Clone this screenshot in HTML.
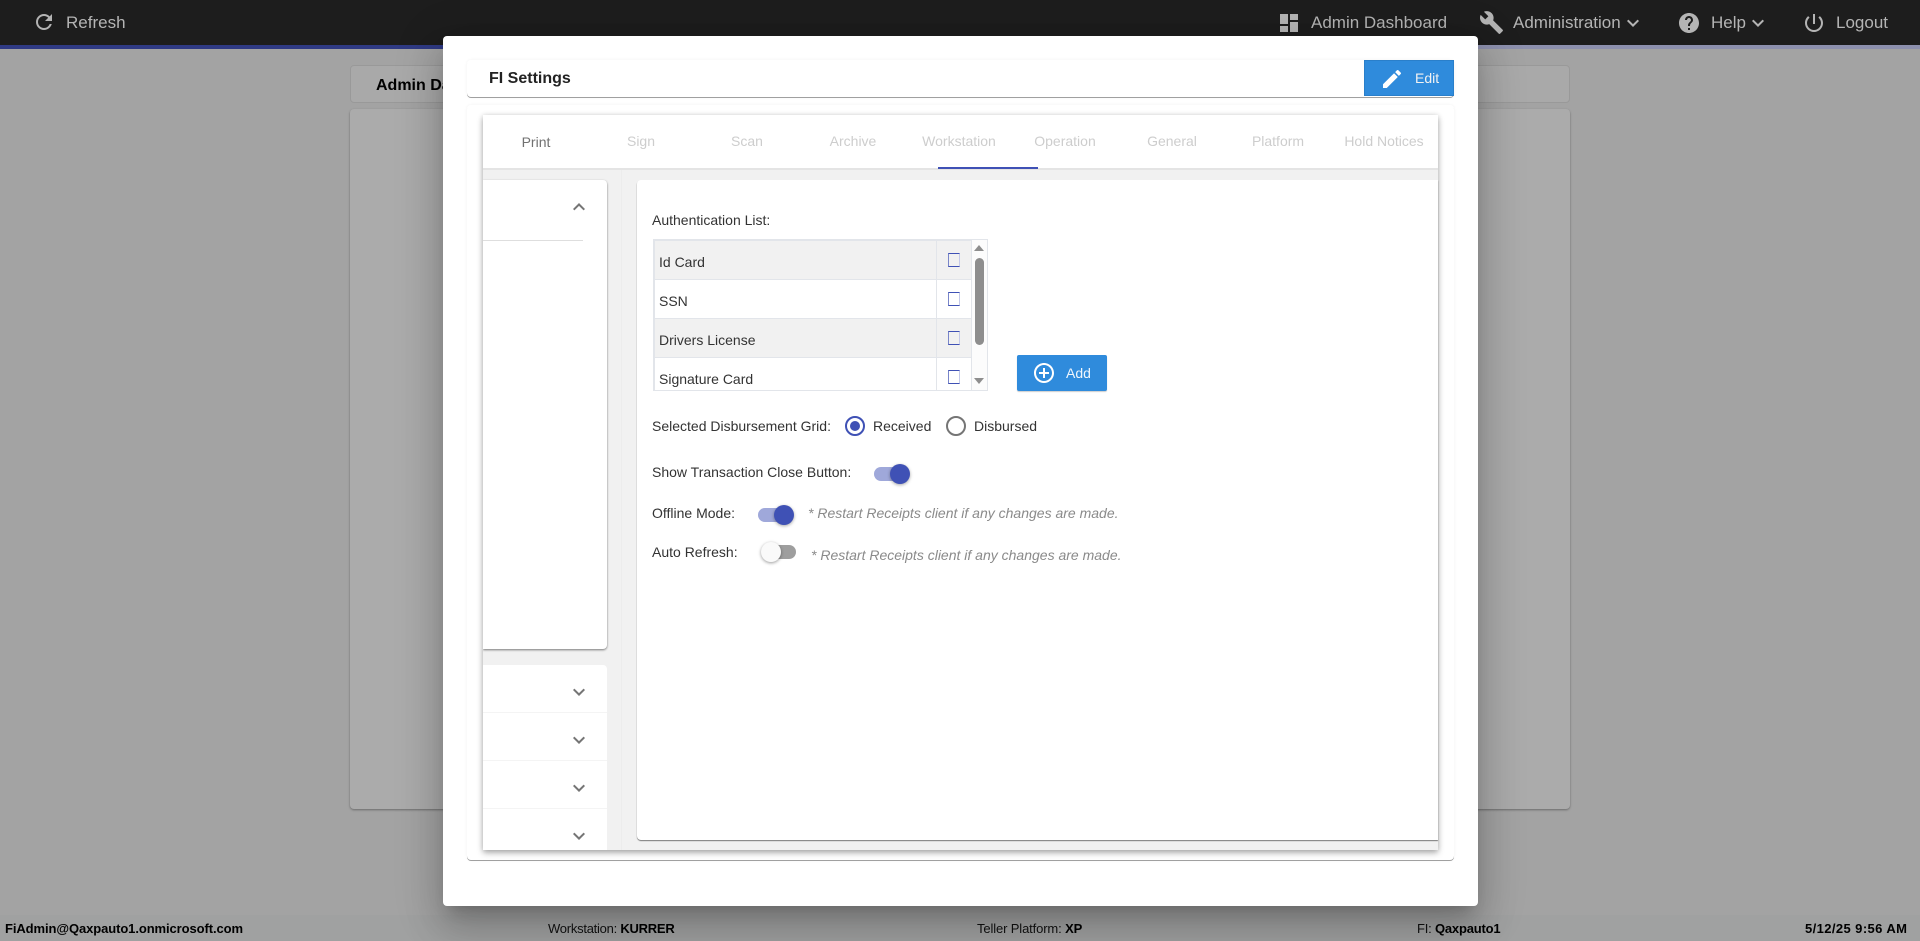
<!DOCTYPE html>
<html><head><meta charset="utf-8"><title>FI Settings</title>
<style>
html,body{margin:0;padding:0}
body{width:1920px;height:941px;overflow:hidden;position:relative;background:#a3a3a3;font-family:"Liberation Sans",sans-serif;font-size:14px;color:#333}
div,span,svg{position:absolute;box-sizing:border-box}
.t{line-height:20px;height:20px;white-space:nowrap}
svg{display:block}
.top{color:#b4b4b4;font-size:17px}
.ic{fill:#b4b4b4}
.tab{color:#cdcdcd;width:106px;text-align:center}
.st{font-size:13px;color:#111;white-space:nowrap;line-height:18px;height:18px}
.st b{position:static;color:#000}
.cell{background:#f1f1f1}
.cb{width:12px;height:14px;border:1px solid #3f51b5;border-right-color:#c5cae9;border-left-color:#7985c9;background:transparent}
.sep{left:483px;width:124px;height:1px;background:#f4f4f4}
.note{font-style:italic;color:#8a8a8a}
.ch{fill:#757575}
</style></head><body>
<!-- top bar -->
<div style="left:0;top:0;width:1920px;height:45px;background:#1d1d1d"></div>
<div style="left:0;top:45px;width:443px;height:4px;background:#2f3a84"></div>
<div style="left:1478px;top:45px;width:442px;height:4px;background:#8d90ad"></div>
<svg class="ic" style="left:32px;top:10px" width="24" height="24" viewBox="0 0 24 24"><path d="M17.65 6.35C16.2 4.9 14.21 4 12 4c-4.42 0-7.99 3.58-7.99 8s3.57 8 7.99 8c3.73 0 6.84-2.55 7.73-6h-2.08c-.82 2.33-3.04 4-5.65 4-3.31 0-6-2.69-6-6s2.69-6 6-6c1.66 0 3.14.69 4.22 1.78L13 11h7V4l-2.35 2.35z"/></svg>
<div class="t top" style="left:66px;top:13px">Refresh</div>
<svg class="ic" style="left:1277px;top:11px" width="24" height="24" viewBox="0 0 24 24"><path d="M3 13h8V3H3v10zm0 8h8v-6H3v6zm10 0h8V11h-8v10zm0-18v6h8V3h-8z"/></svg>
<div class="t top" style="left:1311px;top:13px">Admin Dashboard</div>
<svg class="ic" style="left:1479px;top:10px" width="25" height="25" viewBox="0 0 24 24"><path d="M22.7 19l-9.1-9.1c.9-2.3.4-5-1.5-6.9-2-2-5-2.4-7.4-1.3L9 6 6 9 1.6 4.7C.4 7.1.9 10.1 2.9 12.1c1.9 1.9 4.6 2.4 6.9 1.5l9.1 9.1c.4.4 1 .4 1.4 0l2.3-2.3c.5-.4.5-1.1.1-1.4z"/></svg>
<div class="t top" style="left:1513px;top:13px">Administration</div>
<svg class="ic" style="left:1621px;top:11px" width="24" height="24" viewBox="0 0 24 24"><path d="M16.59 8.59L12 13.17 7.41 8.59 6 10l6 6 6-6z"/></svg>
<svg class="ic" style="left:1677px;top:11px" width="24" height="24" viewBox="0 0 24 24"><path d="M12 2C6.48 2 2 6.48 2 12s4.48 10 10 10 10-4.48 10-10S17.52 2 12 2zm1 17h-2v-2h2v2zm2.07-7.75l-.9.92C13.45 12.9 13 13.5 13 15h-2v-.5c0-1.1.45-2.1 1.17-2.83l1.24-1.26c.37-.36.59-.86.59-1.41 0-1.1-.9-2-2-2s-2 .9-2 2H8c0-2.21 1.79-4 4-4s4 1.79 4 4c0 .88-.36 1.68-.93 2.25z"/></svg>
<div class="t top" style="left:1711px;top:13px">Help</div>
<svg class="ic" style="left:1746px;top:11px" width="24" height="24" viewBox="0 0 24 24"><path d="M16.59 8.59L12 13.17 7.41 8.59 6 10l6 6 6-6z"/></svg>
<svg class="ic" style="left:1802px;top:11px" width="24" height="24" viewBox="0 0 24 24"><path d="M13 3h-2v10h2V3zm4.83 2.17l-1.42 1.42C17.99 7.86 19 9.81 19 12c0 3.87-3.13 7-7 7s-7-3.13-7-7c0-2.19 1.01-4.14 2.58-5.42L6.17 5.17C4.23 6.82 3 9.26 3 12c0 4.97 4.03 9 9 9s9-4.03 9-9c0-2.74-1.23-5.18-3.17-6.83z"/></svg>
<div class="t top" style="left:1836px;top:13px">Logout</div>

<!-- background cards -->
<div style="left:350px;top:65px;width:1220px;height:38px;background:#a9a9a9;border:1px solid #999;border-radius:4px"></div>
<div class="t" style="left:376px;top:76px;font-size:16px;font-weight:bold;color:#000">Admin Dashboard</div>
<div style="left:350px;top:109px;width:1220px;height:700px;background:#ababab;border-radius:4px;box-shadow:0 1px 2px rgba(0,0,0,.35)"></div>

<!-- status bar -->
<div style="left:0;top:915px;width:1920px;height:26px;background:#a0a1a1"></div>
<div class="st" style="left:5px;top:920px;letter-spacing:-.09px"><b>FiAdmin@Qaxpauto1.onmicrosoft.com</b></div>
<div class="st" style="left:548px;top:920px;letter-spacing:-.25px">Workstation: <b>KURRER</b></div>
<div class="st" style="left:977px;top:920px;letter-spacing:-.13px">Teller Platform: <b>XP</b></div>
<div class="st" style="left:1417px;top:920px;letter-spacing:-.2px">FI: <b>Qaxpauto1</b></div>
<div class="st" style="left:1805px;top:920px;letter-spacing:.4px"><b>5/12/25 9:56 AM</b></div>

<!-- modal -->
<div style="left:443px;top:36px;width:1035px;height:870px;background:#fff;border-radius:4px;box-shadow:0 11px 15px -7px rgba(0,0,0,.2),0 24px 38px 3px rgba(0,0,0,.14),0 9px 46px 8px rgba(0,0,0,.12)"></div>

<!-- header card -->
<div style="left:467px;top:60px;width:987px;height:37px;background:#fff;border-radius:4px;box-shadow:0 1px 0 #a0a0a0,0 0 3px rgba(0,0,0,.06)"></div>
<div class="t" style="left:489px;top:69px;font-size:16px;font-weight:bold;color:#222">FI Settings</div>
<div style="left:1364px;top:60px;width:90px;height:36px;background:#2f8bdc;border:1px solid #2a7fca"></div>
<svg style="left:1380px;top:67px;fill:#fff" width="24" height="24" viewBox="0 0 24 24"><path d="M3 17.25V21h3.75L17.81 9.94l-3.75-3.75L3 17.25zM20.71 7.04c.39-.39.39-1.02 0-1.41l-2.34-2.34c-.39-.39-1.02-.39-1.41 0l-1.83 1.83 3.75 3.75 1.83-1.83z"/></svg>
<div class="t" style="left:1415px;top:68px;color:#f2f2f2">Edit</div>

<!-- outer content card -->
<div style="left:467px;top:105px;width:987px;height:755px;background:#fff;border-radius:4px;box-shadow:0 1px 0 #a0a0a0,0 0 3px rgba(0,0,0,.06)"></div>
<!-- inner card -->
<div style="left:483px;top:115px;width:955px;height:735px;background:#f1f1f1;box-shadow:0 3px 6px rgba(0,0,0,.3),0 0 5px rgba(0,0,0,.12)"></div>
<div style="left:483px;top:115px;width:955px;height:55px;background:#fff;border-bottom:2px solid #e4e4e4"></div>
<div style="left:938px;top:167px;width:100px;height:2px;background:#3f51b5"></div>
<div class="t tab" style="left:483px;top:132px;color:#717171">Print</div>
<div class="t tab" style="left:588px;top:131px">Sign</div>
<div class="t tab" style="left:694px;top:131px">Scan</div>
<div class="t tab" style="left:800px;top:131px">Archive</div>
<div class="t tab" style="left:906px;top:131px">Workstation</div>
<div class="t tab" style="left:1012px;top:131px">Operation</div>
<div class="t tab" style="left:1119px;top:131px">General</div>
<div class="t tab" style="left:1225px;top:131px">Platform</div>
<div class="t tab" style="left:1331px;top:131px">Hold Notices</div>

<!-- gutter line -->
<div style="left:621px;top:170px;width:1px;height:680px;background:#ececec"></div>

<!-- left panels -->
<div style="left:483px;top:180px;width:124px;height:469px;background:#fff;border-radius:0 4px 4px 0;box-shadow:0 1px 2px rgba(0,0,0,.5);clip-path:inset(-4px -4px -4px 0)"></div>
<div style="left:483px;top:240px;width:100px;height:1px;background:#dedede"></div>
<svg class="ch" style="left:567px;top:195px" width="24" height="24" viewBox="0 0 24 24"><path d="M12 8l-6 6 1.41 1.41L12 10.83l4.59 4.58L18 14z"/></svg>
<div style="left:483px;top:665px;width:124px;height:185px;background:#fff;border-radius:0 4px 0 0"></div>
<div class="sep" style="top:712px"></div>
<div class="sep" style="top:760px"></div>
<div class="sep" style="top:808px"></div>
<svg class="ch" style="left:567px;top:680px" width="24" height="24" viewBox="0 0 24 24"><path d="M16.59 8.59L12 13.17 7.41 8.59 6 10l6 6 6-6z"/></svg>
<svg class="ch" style="left:567px;top:728px" width="24" height="24" viewBox="0 0 24 24"><path d="M16.59 8.59L12 13.17 7.41 8.59 6 10l6 6 6-6z"/></svg>
<svg class="ch" style="left:567px;top:776px" width="24" height="24" viewBox="0 0 24 24"><path d="M16.59 8.59L12 13.17 7.41 8.59 6 10l6 6 6-6z"/></svg>
<svg class="ch" style="left:567px;top:824px" width="24" height="24" viewBox="0 0 24 24"><path d="M16.59 8.59L12 13.17 7.41 8.59 6 10l6 6 6-6z"/></svg>

<!-- right panel -->
<div style="left:637px;top:180px;width:801px;height:660px;background:#fff;border-radius:4px 0 0 4px;box-shadow:0 1px 1px rgba(0,0,0,.5)"></div>
<div class="t" style="left:652px;top:210px">Authentication List:</div>

<!-- table -->
<div style="left:653px;top:239px;width:335px;height:152px;background:#fff;border:1px solid #e2e5ea"></div>
<div style="left:654px;top:240px;width:1px;height:150px;background:#e2e5ea"></div>
<div class="cell" style="left:655px;top:241px;width:281px;height:38px"></div>
<div class="cell" style="left:937px;top:241px;width:34px;height:38px"></div>
<div class="cell" style="left:655px;top:319px;width:281px;height:38px"></div>
<div class="cell" style="left:937px;top:319px;width:34px;height:38px"></div>
<div style="left:654px;top:240px;width:317px;height:1px;background:#e2e5ea"></div>
<div style="left:654px;top:279px;width:317px;height:1px;background:#e2e5ea"></div>
<div style="left:654px;top:318px;width:317px;height:1px;background:#e2e5ea"></div>
<div style="left:654px;top:357px;width:317px;height:1px;background:#e2e5ea"></div>
<div style="left:936px;top:240px;width:1px;height:150px;background:#e2e5ea"></div>
<div style="left:971px;top:240px;width:1px;height:150px;background:#e2e5ea"></div>
<div style="left:972px;top:240px;width:15px;height:150px;background:#fcfcfc"></div>
<div class="t" style="left:659px;top:252px">Id Card</div>
<div class="t" style="left:659px;top:291px">SSN</div>
<div class="t" style="left:659px;top:330px">Drivers License</div>
<div class="t" style="left:659px;top:369px">Signature Card</div>
<div class="cb" style="left:948px;top:253px"></div>
<div class="cb" style="left:948px;top:292px"></div>
<div class="cb" style="left:948px;top:331px"></div>
<div class="cb" style="left:948px;top:370px"></div>
<div style="left:975px;top:258px;width:9px;height:87px;background:#8e8e8e;border-radius:5px"></div>
<svg style="left:974px;top:245px;fill:#8e8e8e" width="10" height="6" viewBox="0 0 10 6"><path d="M5 0L10 6H0z"/></svg>
<svg style="left:974px;top:378px;fill:#8e8e8e" width="10" height="6" viewBox="0 0 10 6"><path d="M0 0H10L5 6z"/></svg>

<!-- add button -->
<div style="left:1017px;top:355px;width:90px;height:36px;background:#2f8bdc;border-radius:2px;box-shadow:0 1px 1px rgba(0,0,0,.2)"></div>
<svg style="left:1032px;top:361px;fill:#fff" width="24" height="24" viewBox="0 0 24 24"><path d="M13 7h-2v4H7v2h4v4h2v-4h4v-2h-4V7zm-1-5C6.48 2 2 6.48 2 12s4.48 10 10 10 10-4.48 10-10S17.52 2 12 2zm0 18c-4.41 0-8-3.59-8-8s3.59-8 8-8 8 3.59 8 8-3.59 8-8 8z"/></svg>
<div class="t" style="left:1066px;top:363px;color:#eef5fc">Add</div>

<!-- radios -->
<div class="t" style="left:652px;top:416px">Selected Disbursement Grid:</div>
<div style="left:845px;top:416px;width:20px;height:20px;border:2px solid #3f51b5;border-radius:50%"></div>
<div style="left:850px;top:421px;width:10px;height:10px;background:#3f51b5;border-radius:50%"></div>
<div class="t" style="left:873px;top:416px">Received</div>
<div style="left:946px;top:416px;width:20px;height:20px;border:2px solid #757575;border-radius:50%"></div>
<div class="t" style="left:974px;top:416px">Disbursed</div>

<!-- switches -->
<div class="t" style="left:652px;top:462px">Show Transaction Close Button:</div>
<div style="left:874px;top:467px;width:34px;height:14px;background:#9fa8da;border-radius:7px"></div>
<div style="left:890px;top:464px;width:20px;height:20px;background:#3f51b5;border-radius:50%;box-shadow:0 1px 3px rgba(0,0,0,.35)"></div>

<div class="t" style="left:652px;top:503px">Offline Mode:</div>
<div style="left:758px;top:508px;width:34px;height:14px;background:#9fa8da;border-radius:7px"></div>
<div style="left:774px;top:505px;width:20px;height:20px;background:#3f51b5;border-radius:50%;box-shadow:0 1px 3px rgba(0,0,0,.35)"></div>
<div class="t note" style="left:808px;top:503px">* Restart Receipts client if any changes are made.</div>

<div class="t" style="left:652px;top:542px">Auto Refresh:</div>
<div style="left:762px;top:545px;width:34px;height:14px;background:#9e9e9e;border-radius:7px"></div>
<div style="left:761px;top:542px;width:20px;height:20px;background:#fafafa;border-radius:50%;box-shadow:0 1px 3px rgba(0,0,0,.4)"></div>
<div class="t note" style="left:811px;top:545px">* Restart Receipts client if any changes are made.</div>
</body></html>
